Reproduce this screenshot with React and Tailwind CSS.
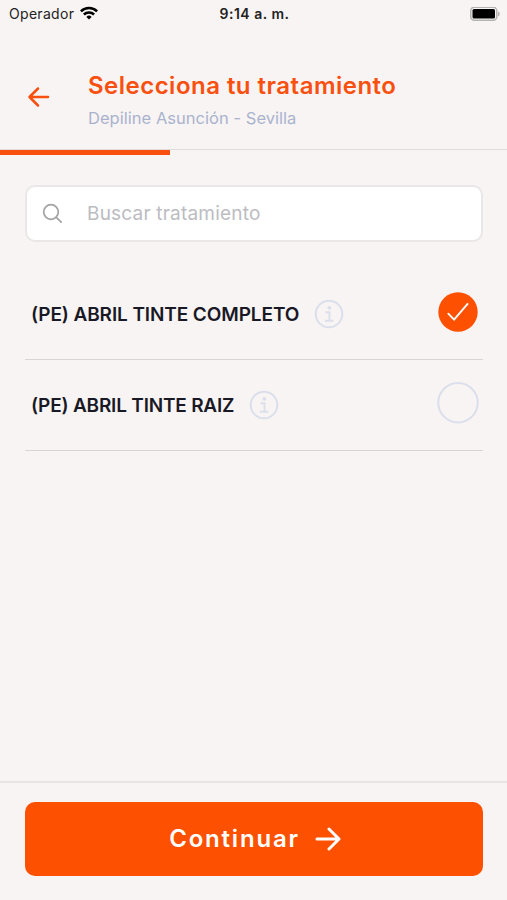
import React, { useState } from "react";

const treatments = [
    { id: 1, name: "(PE) ABRIL TINTE COMPLETO", tracking: "tracking-[-0.1px]" },
    { id: 2, name: "(PE) ABRIL TINTE RAIZ", tracking: "tracking-[-0.2px]" },
];

function StatusBar() {
    return (
        <div className="h-[28px] shrink-0 grid grid-cols-3 items-center pl-[9px] pr-[7px] text-[14px] leading-[28px] text-[#222]">
            <div className="flex items-center gap-[6px]">
                <span className="tracking-[0.3px]">Operador</span>
                <svg className="-mt-[2px]" width="18" height="14" viewBox="0 0 18 14" fill="none" stroke="#000" strokeWidth="2.5">
                    <path d="M0.9 5.4a11.5 11.5 0 0 1 16.2 0" />
                    <path d="M3.9 8.5a7.2 7.2 0 0 1 10.2 0" />
                    <path d="M9 13.6l-2.6-2.7a3.7 3.7 0 0 1 5.2 0z" fill="#000" stroke="none" />
                </svg>
            </div>
            <span className="text-center font-semibold tracking-[0.5px] whitespace-nowrap">9:14 a. m.</span>
            <svg className="justify-self-end" width="30" height="15" viewBox="0 0 30 15">
                <rect x="0.75" y="0.25" width="26" height="13" rx="3.5" fill="#f8f4f3" stroke="#b5b3b2" strokeWidth="1.5" />
                <rect x="2.5" y="2" width="22.5" height="9.5" rx="1.5" fill="#000" />
                <path d="M28 4.5v5c2.3-.9 2.3-4.1 0-5z" fill="#b5b3b2" />
            </svg>
        </div>
    );
}

function InfoIcon() {
    return (
        <svg width="30" height="30" viewBox="0 0 30 30" fill="none" stroke="#dbdfec" strokeWidth="2">
            <circle cx="15" cy="15" r="13.3" />
            <circle cx="15.4" cy="8.8" r="1.9" fill="#dbdfec" stroke="none" />
            <path d="M11.5 13.2h4v8.2M11 21.7h8.5" />
        </svg>
    );
}

function TreatmentRow({ treatment, selected, onSelect }) {
    return (
        <li className="h-[91px] flex items-start justify-between border-b border-[#d8d5d5] pl-[6px] pr-[4px]">
            <div className="flex items-center gap-[15px] mt-[31px]">
                <span className={`text-[19px] leading-[30px] font-semibold text-[#191926] whitespace-nowrap ${treatment.tracking}`}>
                    {treatment.name}
                </span>
                <button type="button" className="-mt-[2px]">
                    <InfoIcon />
                </button>
            </div>
            <button type="button" className="mt-[22px]" onClick={onSelect}>
                {selected ? (
                    <svg width="42" height="42" viewBox="0 0 42 42" fill="none">
                        <circle cx="21" cy="21" r="19.7" fill="#fd5000" />
                        <path d="M11.3 22.7l5.8 6 13.5-15.8" stroke="#fff" strokeWidth="1.9" strokeLinecap="round" />
                    </svg>
                ) : (
                    <svg width="42" height="42" viewBox="0 0 42 42" fill="none">
                        <circle cx="21" cy="20.7" r="19.7" stroke="#dbdfec" strokeWidth="2" />
                    </svg>
                )}
            </button>
        </li>
    );
}

export default function App() {
    const [selectedId, setSelectedId] = useState(1);
    const [search, setSearch] = useState("");

    const visible = treatments.filter((treatment) =>
        treatment.name.toLowerCase().includes(search.toLowerCase())
    );

    return (
        <div className="h-[900px] w-full flex flex-col bg-[#f8f4f3] font-['Inter',sans-serif]">
            <StatusBar />

            <header className="h-[127px] shrink-0 flex flex-col">
                <div className="h-[121px] flex items-start">
                    <button type="button" className="w-[88px] pl-[27px] mt-[58px]">
                        <svg width="24" height="22" viewBox="0 0 24 22" fill="none" stroke="#f9500f" strokeWidth="2.5" strokeLinecap="round" strokeLinejoin="round">
                            <path d="M21 11H2.5M11 2.500L2.5 11l8.5 8.5" />
                        </svg>
                    </button>
                    <div className="mt-[42px] whitespace-nowrap">
                        <h1 className="text-[24px] leading-[32px] font-semibold tracking-[0.48px] text-[#f9500f]">
                            Selecciona tu tratamiento
                        </h1>
                        <p className="text-[16.5px] leading-[24px] mt-[4px] tracking-[0.03px] text-[#a9b3ce]">
                            Depiline Asunción - Sevilla
                        </p>
                    </div>
                </div>
                <div className="h-[6px] border-t border-[#dfdcdb]">
                    <div className="h-[5px] w-[169.5px] bg-[#f9500f]" />
                </div>
            </header>

            <main className="flex-1 pl-[25px] pr-[24px] pt-[30px]">
                <label className="h-[57px] flex items-center rounded-[10px] border-2 border-[#e9e7e8] bg-white pl-[15px]">
                    <svg className="shrink-0" width="22" height="22" viewBox="0 0 22 22" fill="none" stroke="#a3a3a3" strokeWidth="1.7" strokeLinecap="round">
                        <circle cx="9" cy="9" r="7.3" />
                        <path d="M14.3 14.3l4.9 4.9" />
                    </svg>
                    <input
                        type="text"
                        value={search}
                        onChange={(e) => setSearch(e.target.value)}
                        placeholder="Buscar tratamiento"
                        className="ml-[23px] pt-px flex-1 bg-transparent text-[19px] tracking-[0.2px] outline-none placeholder:text-[#bcbcc2]"
                    />
                </label>

                <ul className="mt-[27px]">
                    {visible.map((treatment) => (
                        <TreatmentRow
                            key={treatment.id}
                            treatment={treatment}
                            selected={treatment.id === selectedId}
                            onSelect={() => setSelectedId(treatment.id)}
                        />
                    ))}
                </ul>
            </main>

            <footer className="h-[119px] shrink-0 border-t-2 border-[#e8e4e3] pl-[25px] pr-[24px] pt-[19px]">
                <button
                    type="button"
                    className="h-[74px] w-full flex items-center justify-center gap-[14px] rounded-[10px] bg-[#fd5000] pl-[3px] text-white"
                >
                    <span className="text-[24px] leading-[32px] -mt-px font-semibold tracking-[1.8px]">Continuar</span>
                    <svg width="28" height="24" viewBox="0 0 28 24" fill="none" stroke="#fff" strokeWidth="3" strokeLinecap="round" strokeLinejoin="round">
                        <path d="M3 12h22M15 2l10 10-10 10" />
                    </svg>
                </button>
            </footer>
        </div>
    );
}
